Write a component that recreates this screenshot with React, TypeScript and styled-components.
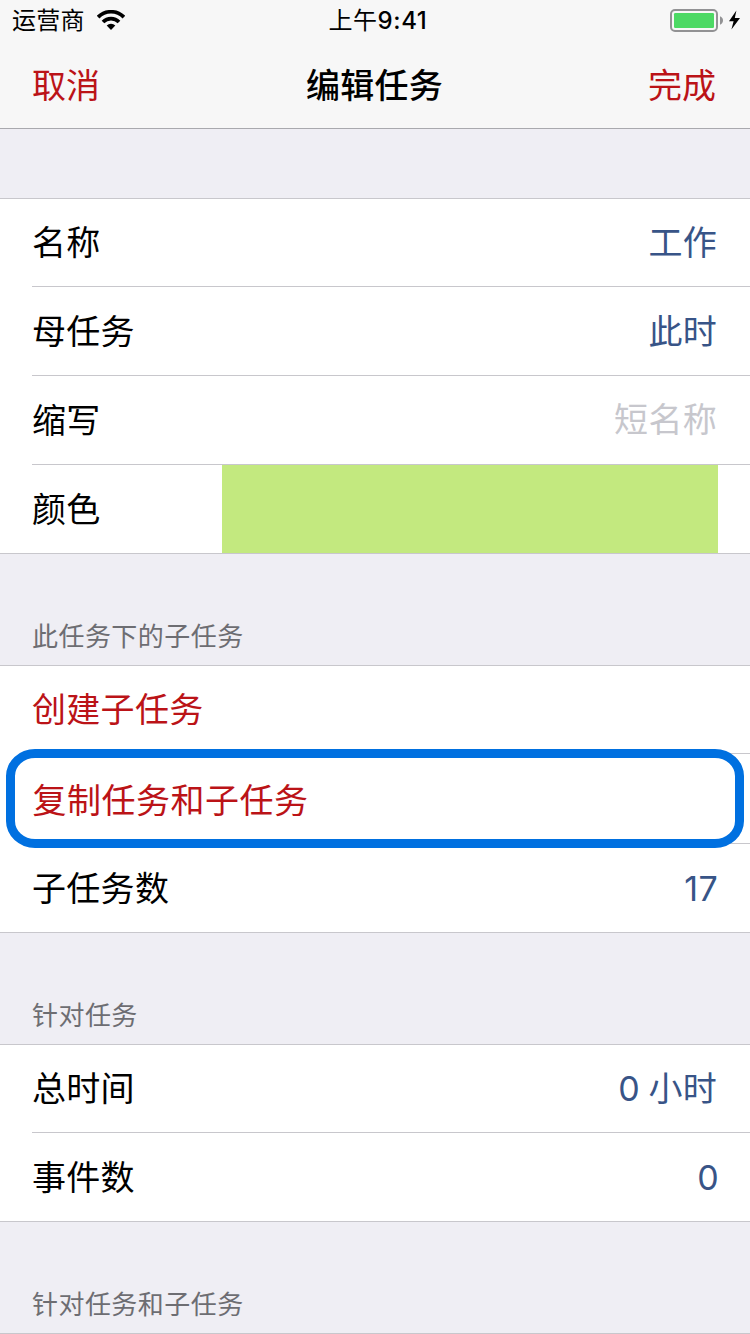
import React from "react";
import styled, { createGlobalStyle } from "styled-components";

const GlobalStyle = createGlobalStyle`
  html, body { margin: 0; padding: 0; background: #efeef4; }
  body {
    font-family: Inter, "Noto Sans CJK SC", sans-serif;
    color: #000;
    overflow: hidden;
  }
`;

const Screen = styled.div`
  width: 750px;
  height: 1334px;
  overflow: hidden;
  background: #efeef4;
`;

const TopBar = styled.header`
  box-sizing: border-box;
  height: 129px;
  background: #f7f7f7;
  border-bottom: 1px solid #a9a9ae;
`;

const StatusBar = styled.div`
  display: grid;
  grid-template-columns: 1fr auto 1fr;
  align-items: center;
  height: 40px;
  padding: 0 9px 0 12px;
  font-size: 24px;
  line-height: 38px;
`;

const Carrier = styled.div`
  display: flex;
  align-items: center;
  gap: 12px;
  letter-spacing: 0.3px;
  & > span {
    padding-top: 2px;
  }
`;

const Clock = styled.div`
  letter-spacing: 0.5px;
  padding: 2px 0 0 3px;
  & > b {
    font-weight: 550;
    letter-spacing: 0.6px;
  }
`;

const Power = styled.div`
  display: flex;
  justify-content: flex-end;
`;

const NavBar = styled.nav`
  display: grid;
  grid-template-columns: 1fr auto 1fr;
  align-items: center;
  height: 85px;
  padding: 3px 34px 0 32px;
  font-size: 34px;
  line-height: 85px;
`;

const NavButton = styled.button<{ $end?: boolean }>`
  border: 0;
  padding: 0;
  background: none;
  font: inherit;
  color: #bb1317;
  text-align: ${(p) => (p.$end ? "right" : "left")};
`;

const Title = styled.h1`
  margin: 0;
  padding-left: 1px;
  font-size: 34px;
  font-weight: 500;
  letter-spacing: 0.2px;
`;

const SectionHeader = styled.h2<{ $height?: number }>`
  box-sizing: border-box;
  height: ${(p) => p.$height ?? 111}px;
  margin: 0;
  padding: 63px 32px 0;
  font-size: 26px;
  font-weight: 400;
  line-height: 40px;
  letter-spacing: 0.45px;
  color: #6d6d72;
`;

const Group = styled.section`
  background: #fff;
  border-top: 1px solid #c8c7cc;
  border-bottom: 1px solid #c8c7cc;
`;

const Row = styled.div<{ $first?: boolean }>`
  box-sizing: border-box;
  display: flex;
  align-items: center;
  justify-content: space-between;
  height: ${(p) => (p.$first ? 87 : 88)}px;
  margin-left: 32px;
  padding-right: 32px;
  font-size: 34px;
  line-height: ${(p) => (p.$first ? 50 : 52)}px;
  & + & {
    height: 89px;
    border-top: 1px solid #c8c7cc;
  }
`;

const Label = styled.span<{ $action?: boolean }>`
  padding-top: 1px;
  letter-spacing: 0.3px;
  color: ${(p) => (p.$action ? "#bb1317" : "#000")};
`;

const Value = styled.span<{ $muted?: boolean; $outdent?: number }>`
  padding-top: ${(p) => (p.$muted ? 0 : 1)}px;
  margin-right: ${(p) => 1 - (p.$outdent ?? 0)}px;
  letter-spacing: 0.3px;
  word-spacing: -1.5px;
  color: ${(p) => (p.$muted ? "#c7c7cd" : "#385487")};
`;

const Swatch = styled.div`
  width: 496px;
  height: 100%;
  background: #c3e97f;
`;

const Highlighted = styled.div`
  position: relative;
`;

const HighlightRing = styled.div`
  position: absolute;
  z-index: 1;
  left: 6px;
  right: 6px;
  top: -5px;
  bottom: -5px;
  box-sizing: border-box;
  border: 9px solid #0070e0;
  border-radius: 29px / 27px;
`;

const CopyRow = styled(Row)`
  padding-top: 3px;
  height: 89px;
  & > ${Label} {
    letter-spacing: 0.5px;
    padding-left: 0.5px;
  }
`;

const Divider = styled.div<{ $full?: boolean }>`
  height: 1px;
  margin-left: ${(p) => (p.$full ? 0 : 32)}px;
  background: #c8c7cc;
`;

const WifiIcon = () => (
  <svg width="28" height="20" viewBox="0 0 28 20" fill="none" stroke="#000">
    <path d="M1.1 7.1 A18.2 18.2 0 0 1 26.9 7.1" strokeWidth="3.7" />
    <path d="M6 12 A11.3 11.3 0 0 1 22 12" strokeWidth="3.7" />
    <path d="M9.7 15.6 A6.1 6.1 0 0 1 18.3 15.6 L14 19.9 Z" fill="#000" stroke="none" />
  </svg>
);

const BatteryIcon = () => (
  <svg width="71" height="24" viewBox="0 0 71 24">
    <rect x="1" y="2" width="46" height="21" rx="4" fill="none" stroke="#929294" strokeWidth="2" />
    <rect x="4" y="5" width="40" height="15" rx="1.2" fill="#4cd964" />
    <path d="M50 8.3 Q53 9.6 53 12.5 Q53 15.4 50 16.7 Z" fill="#929294" />
    <path d="M66.4 2.4 L59 13.2 H63.6 L61.4 21.4 L70 10 H64.8 Z" fill="#000" />
  </svg>
);

export default function App() {
  return (
    <Screen>
      <GlobalStyle />
      <TopBar>
        <StatusBar>
          <Carrier>
            <span>运营商</span>
            <WifiIcon />
          </Carrier>
          <Clock>
            上午<b>9:41</b>
          </Clock>
          <Power>
            <BatteryIcon />
          </Power>
        </StatusBar>
        <NavBar>
          <NavButton>取消</NavButton>
          <Title>编辑任务</Title>
          <NavButton $end>完成</NavButton>
        </NavBar>
      </TopBar>

      <SectionHeader $height={69} />
      <Group>
        <Row $first>
          <Label>名称</Label>
          <Value>工作</Value>
        </Row>
        <Row>
          <Label>母任务</Label>
          <Value>此时</Value>
        </Row>
        <Row>
          <Label>缩写</Label>
          <Value $muted>短名称</Value>
        </Row>
        <Row>
          <Label>颜色</Label>
          <Swatch />
        </Row>
      </Group>

      <SectionHeader>此任务下的子任务</SectionHeader>
      <Group>
        <Row $first>
          <Label $action>创建子任务</Label>
        </Row>
        <Divider />
        <Highlighted>
          <CopyRow>
            <Label $action>复制任务和子任务</Label>
          </CopyRow>
          <HighlightRing />
        </Highlighted>
        <Divider />
        <Row>
          <Label>子任务数</Label>
          <Value $outdent={1}>17</Value>
        </Row>
      </Group>

      <SectionHeader>针对任务</SectionHeader>
      <Group>
        <Row $first>
          <Label>总时间</Label>
          <Value>0 小时</Value>
        </Row>
        <Row>
          <Label>事件数</Label>
          <Value $outdent={2}>0</Value>
        </Row>
      </Group>

      <SectionHeader>针对任务和子任务</SectionHeader>
      <Divider $full />
    </Screen>
  );
}
